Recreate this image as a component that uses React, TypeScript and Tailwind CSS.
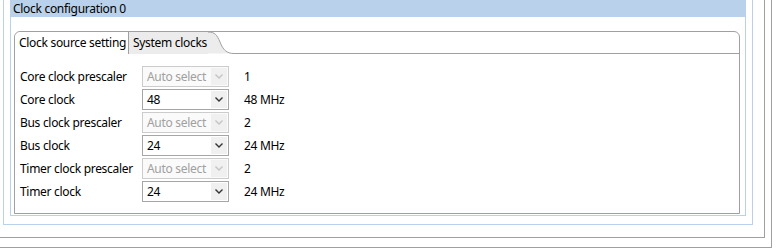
import React from "react";

const rows: { label: string; value: string; sel: string; disabled: boolean }[] = [
  { label: "Core clock prescaler", value: "1", sel: "Auto select", disabled: true },
  { label: "Core clock", value: "48 MHz", sel: "48", disabled: false },
  { label: "Bus clock prescaler", value: "2", sel: "Auto select", disabled: true },
  { label: "Bus clock", value: "24 MHz", sel: "24", disabled: false },
  { label: "Timer clock prescaler", value: "2", sel: "Auto select", disabled: true },
  { label: "Timer clock", value: "24 MHz", sel: "24", disabled: false },
];

function Chevron({ disabled }: { disabled: boolean }) {
  return (
    <svg width="8" height="5" viewBox="0 0 8 5">
      <path
        d="M0.5 0.5 L4 4 L7.5 0.5"
        fill="none"
        stroke={disabled ? "#c4c4c4" : "#333333"}
        strokeWidth="1.4"
      />
    </svg>
  );
}

function Select({ text, disabled }: { text: string; disabled: boolean }) {
  return (
    <div
      className={
        disabled
          ? "flex h-[21px] w-[87px] items-center border border-[#cccccc] bg-[#fafafa]"
          : "flex h-[21px] w-[87px] items-center border border-[#a6a6a6] bg-white"
      }
    >
      <span
        className={
          disabled
            ? "flex-1 overflow-hidden whitespace-nowrap pl-[4px] leading-[19px] text-[#a0a0a0]"
            : "flex-1 overflow-hidden whitespace-nowrap pl-[4px] leading-[19px] text-black"
        }
      >
        {text}
      </span>
      <div className="mr-[1px] flex h-[17px] w-[16px] shrink-0 items-center justify-center bg-[#f0f0f0]">
        <Chevron disabled={disabled} />
      </div>
    </div>
  );
}

export default function App() {
  return (
    <div className="h-[249px] w-[779px] overflow-hidden bg-white font-['Noto_Sans',sans-serif] text-[12px] tracking-[-0.3px] text-black">
      <div className="h-[248px] w-[772px] border-b border-r border-[#a0a0a0]">
        <div className="h-[238px] w-[765px] border-b border-r border-[#a0a0a0]">
          <div className="ml-[3px] flex h-[225px] w-[750px] flex-col border-x border-b border-[#b9d1ea] pl-[6px]">
            <div className="h-[17px] w-[736px] whitespace-nowrap bg-[#b9d1ea] pl-[3px] leading-[17px]">
              Clock configuration 0
            </div>
            <div className="h-[199px] w-[736px] border-x border-b border-[#b9d1ea] pb-[2px] pl-[3px] pr-[5px] pt-[14px]">
              <div className="flex h-[183px] w-[726px] flex-col rounded-t-[6px] border border-[#a0a0a0]">
                <div className="flex h-[22px]">
                  <div className="w-[113px] shrink-0 whitespace-nowrap rounded-tl-[6px] bg-white pl-[4px] leading-[21px]">
                    Clock source setting
                  </div>
                  <div className="w-[80px] shrink-0 whitespace-nowrap border-l border-[#a0a0a0] bg-[#ececec] pl-[4px] leading-[21px]">
                    System clocks
                  </div>
                  <svg width="26" height="22" viewBox="0 0 26 22" className="block shrink-0">
                    <path d="M0 0 C7 0 9 3 12 10 C15 18 19 21.5 26 21.5 L0 21.5 Z" fill="#ececec" />
                    <path d="M0 0 C7 0 9 3 12 10 C15 18 19 21.5 26 21.5" fill="none" stroke="#a0a0a0" strokeWidth="1" />
                  </svg>
                  <div className="flex-1 border-b border-[#a0a0a0]" />
                </div>
                <div className="flex flex-col gap-[2px] pl-[5px] pt-[12px]">
                  {rows.map((r) => (
                    <div key={r.label} className="flex h-[21px] items-center whitespace-nowrap">
                      <div className="w-[122px]">{r.label}</div>
                      <Select text={r.sel} disabled={r.disabled} />
                      <div className="pl-[15px]">{r.value}</div>
                    </div>
                  ))}
                </div>
              </div>
            </div>
          </div>
        </div>
      </div>
    </div>
  );
}
